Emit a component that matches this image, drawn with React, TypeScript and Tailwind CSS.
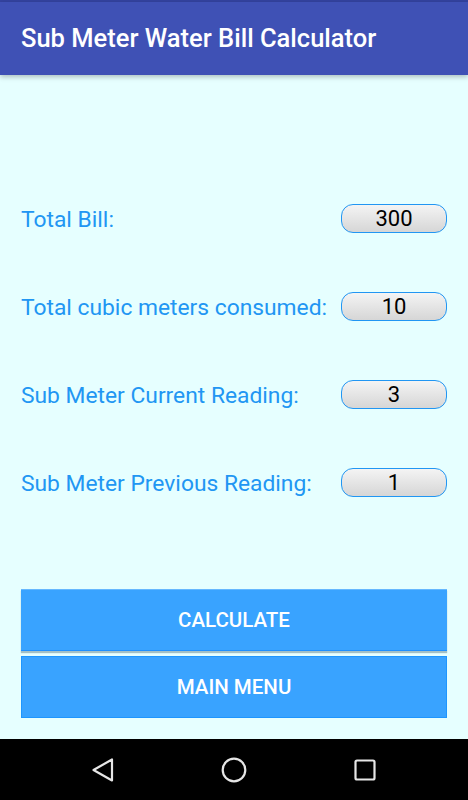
import React from "react";

const rows = [
  { label: "Total Bill:", value: "300" },
  { label: "Total cubic meters consumed:", value: "10" },
  { label: "Sub Meter Current Reading:", value: "3" },
  { label: "Sub Meter Previous Reading:", value: "1" },
];

export default function App() {
  return (
    <div
      className="w-[468px] h-[800px] flex flex-col bg-[#e6ffff] overflow-hidden"
      style={{ fontFamily: "Roboto, 'Liberation Sans', sans-serif" }}
    >
      <div className="h-[2px] bg-[#3443a0]" />
      <div className="h-[73px] bg-[#3f51b5] flex items-center pl-[21px] shadow-[0_2px_5px_rgba(0,0,0,0.25)] relative z-10">
        <span className="text-white text-[25.5px] font-medium leading-none pt-[1px]">
          Sub Meter Water Bill Calculator
        </span>
      </div>
      <div className="flex-1 flex flex-col px-[21px]">
        <div className="flex flex-col pt-[129px] gap-[59px]">
          {rows.map((r) => (
            <div key={r.label} className="flex items-center justify-between h-[29px]">
              <span className="text-[#2196f3] text-[22.8px] leading-none pt-[4px]">{r.label}</span>
              <div className="w-[106px] h-[29px] rounded-[12px] border border-[#2196f3] bg-gradient-to-b from-[#f4f4f4] to-[#d6d6d6] flex items-center justify-center text-black text-[22px] leading-none pt-[1px]">
                {r.value}
              </div>
            </div>
          ))}
        </div>
        <div className="flex flex-col mt-[92px]">
          <div className="h-[62px] bg-[#39a3ff] border-t border-[#66b8ff] border-b border-b-[#1e90ff] flex items-center justify-center text-white text-[20.5px] font-medium shadow-[0_2px_1px_rgba(120,150,160,0.6)]">
            CALCULATE
          </div>
          <div className="h-[62px] mt-[5px] bg-[#39a3ff] border border-[#1e96ff] flex items-center justify-center text-white text-[20.5px] font-medium">
            MAIN MENU
          </div>
        </div>
      </div>
      <div className="h-[61px] bg-black flex items-center justify-center">
        <div className="flex items-center justify-between w-[288px]">
          <svg width="26" height="26" viewBox="0 0 26 26">
            <path d="M22 2.5 L22 23.5 L3.5 13 Z" fill="none" stroke="#e6e6e6" strokeWidth="2.2" strokeLinejoin="round" />
          </svg>
          <svg width="26" height="26" viewBox="0 0 26 26">
            <circle cx="13" cy="13" r="11.3" fill="none" stroke="#e6e6e6" strokeWidth="2.2" />
          </svg>
          <svg width="26" height="26" viewBox="0 0 26 26">
            <rect x="3.5" y="3.5" width="19" height="19" rx="1.5" fill="none" stroke="#e6e6e6" strokeWidth="2.2" />
          </svg>
        </div>
      </div>
    </div>
  );
}
